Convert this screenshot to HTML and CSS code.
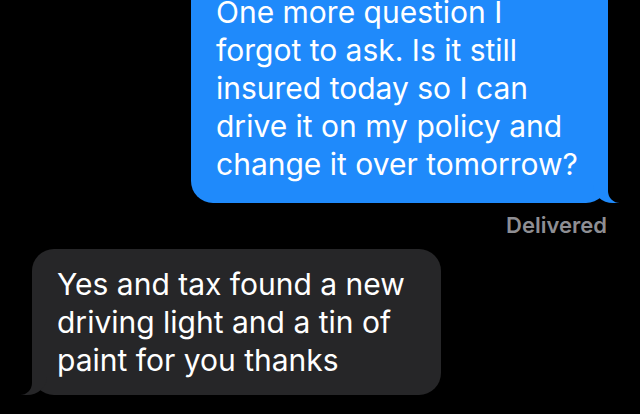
FILE: index.html
```html
<!DOCTYPE html>
<html lang="en">
<head>
  <meta charset="UTF-8">
  <title>Messages</title>
  <link rel="stylesheet" href="styles.css">
</head>
<body>
  <div class="thread">
    <div class="bubble sent">One more question I forgot to ask. Is it still insured today so I can drive it on my policy and change it over tomorrow?</div>
    <div class="status">Delivered</div>
    <div class="bubble received">Yes and tax found a new driving light and a tin of paint for you thanks</div>
  </div>
</body>
</html>
```

FILE: styles.css
```css
body {
  margin: 0;
  background: #000;
  font-family: 'Inter', 'Noto Sans', sans-serif;
  overflow: hidden;
}

.thread {
  display: flex;
  flex-direction: column;
  margin-top: -23px;
}

.bubble {
  position: relative;
  box-sizing: border-box;
  padding: 16px 25px;
  border-radius: 22px;
  font-size: 30px;
  line-height: 38px;
  color: #fff;
}

.sent {
  align-self: flex-end;
  width: 417px;
  margin-right: 32px;
  padding-bottom: 20px;
  background: #1f8afb;
}

.received {
  align-self: flex-start;
  width: 409px;
  margin-left: 32px;
  margin-top: 11px;
  background: #262628;
}

/* tails */
.bubble::before,
.bubble::after {
  content: "";
  position: absolute;
  bottom: 0;
  height: 26px;
}

.sent::before {
  right: -11px;
  width: 26px;
  background: #1f8afb;
  border-bottom-left-radius: 20px 18px;
}

.sent::after {
  right: -18px;
  width: 18px;
  background: #000;
  border-bottom-left-radius: 12px;
}

.received::before {
  left: -11px;
  width: 26px;
  background: #262628;
  border-bottom-right-radius: 20px 18px;
}

.received::after {
  left: -18px;
  width: 18px;
  background: #000;
  border-bottom-right-radius: 12px;
}

.status {
  align-self: flex-end;
  margin: 9px 33px 0 0;
  font-size: 22px;
  line-height: 26px;
  font-weight: 600;
  color: #8e8e93;
}
```
